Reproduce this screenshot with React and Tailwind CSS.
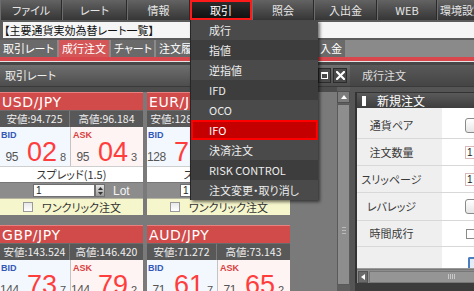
import React from 'react';

const menu = [
  { t: 'ファイル', w: 'w-[62px]' },
  { t: 'レート', w: 'w-[65px]' },
  { t: '情報', w: 'w-[63px]' },
  { t: '取引', w: 'w-[62px]', active: true },
  { t: '照会', w: 'w-[62px]' },
  { t: '入出金', w: 'w-[63px]' },
  { t: 'WEB', w: 'w-[60px]' },
  { t: '環境設定', w: 'w-[50px]' },
];

const tabs = [
  { t: '取引レート', w: 'w-[57px]' },
  { t: '成行注文', w: 'w-[50px]', red: true },
  { t: 'チャート', w: 'w-[43px]' },
  { t: '注文履歴', w: 'w-[50px]' },
  { t: '約定履歴', w: 'w-[50px]' },
  { t: '建玉一覧', w: 'w-[55px]' },
  { t: '入金', w: 'w-[28px]' },
];

const cards = [
  { pair: 'USD/JPY', low: '94.725', high: '96.184', bid: ['95', '02', '8'], ask: ['95', '04', '3'], spread: '1.5' },
  { pair: 'EUR/JPY', low: '128.150', high: '129.880', bid: ['128', '72', '5'], ask: ['128', '74', '5'], spread: '2.0' },
  { pair: 'GBP/JPY', low: '143.524', high: '146.420', bid: ['144', '73', '7'], ask: ['144', '79', '2'], spread: '5.5' },
  { pair: 'AUD/JPY', low: '71.272', high: '73.143', bid: ['71', '61', '7'], ask: ['71', '65', '2'], spread: '3.5' },
];

const dd = ['成行', '指値', '逆指値', 'IFD', 'OCO', 'IFO', '決済注文', 'RISK CONTROL', '注文変更・取り消し'];

function PriceCell({ kind, v }) {
  const bid = kind === 'BID';
  return (
    <div className={bid ? 'bg-[#f3f8fe]' : 'bg-[#fff4f4]'}>
      <div
        className={`mt-[4px] h-[9px] text-[9px] leading-[9px] font-bold font-['Liberation_Sans',sans-serif] ${
          bid ? 'text-[#3358b8] pl-[1px]' : 'text-[#d94040] pl-[2px]'
        }`}
      >
        {kind}
      </div>
      <div className="flex items-baseline font-['Liberation_Sans',sans-serif] -mt-[1px]">
        <span className="w-[18px] text-right text-[12px] text-[#555] tracking-[-0.4px]">{v[0]}</span>
        <span className="ml-[9px] w-[31px] text-[27px] leading-none text-[#ff3d3d]">{v[1]}</span>
        <span className="ml-[2px] text-[11px] text-[#555]">{v[2]}</span>
      </div>
    </div>
  );
}

function Card({ c }) {
  return (
    <div className="w-[143px] flex flex-col">
      <div className="h-[18px] bg-[#d24b4b] border-t border-[#e88080] pl-[2px] flex items-center text-[14px] text-white font-['DejaVu_Sans',sans-serif] tracking-[0.6px]">
        {c.pair}
      </div>
      <div className="h-[17px] grid grid-cols-[70px_1fr] bg-[#585858] border-t border-[#6a6a6a] text-[10.5px] text-[#f0f0f0]">
        <div className="flex items-center justify-center border-r border-[#7a7a7a]">安値:{c.low}</div>
        <div className="flex items-center justify-center">高値:{c.high}</div>
      </div>
      <div className="h-[40px] grid grid-cols-[70px_1fr] gap-x-[1px] bg-[#c4c4c4] border-b border-[#cfcfcf]">
        <PriceCell kind="BID" v={c.bid} />
        <PriceCell kind="ASK" v={c.ask} />
      </div>
      <div className="h-[15px] bg-white flex items-center justify-center text-[11px] text-[#333]">
        スプレッド({c.spread})
      </div>
      <div className="h-[16px] bg-[#8c8c8c] border-t border-[#777] flex items-center">
        <div className="ml-[33px] w-[62px] h-[13px] bg-white border border-[#6f6f6f] text-[10px] leading-[11px] pl-[2px] text-[#222] font-['Liberation_Sans',sans-serif]">
          1
        </div>
        <div className="w-[10px] h-[13px] bg-linear-to-b from-[#e6e6e6] to-[#9a9a9a] border border-[#6f6f6f] flex flex-col items-center justify-center gap-[2px]">
          <svg width="5" height="3" viewBox="0 0 5 3"><path d="M0 3L2.5 0L5 3Z" fill="#333" /></svg>
          <svg width="5" height="3" viewBox="0 0 5 3"><path d="M0 0L2.5 3L5 0Z" fill="#333" /></svg>
        </div>
        <span className="ml-[8px] text-[12px] text-[#f4f4f4] font-['Liberation_Sans',sans-serif]">Lot</span>
      </div>
      <div className="h-[17px] bg-[#f6f6cc] border-t border-[#b5b5a0] flex items-center">
        <div className="ml-[23px] w-[10px] h-[10px] bg-linear-to-b from-[#e8e8e8] to-white border border-[#9a9a9a]" />
        <span className="ml-[9px] text-[11px] text-[#333]">ワンクリック注文</span>
      </div>
    </div>
  );
}

function FormRow({ label, h, children, pt }) {
  return (
    <div className={`${h} flex border-b border-[#d8d8d8]`}>
      <div className={`w-[85px] bg-[#efefef] flex items-center justify-center pr-[16px] text-[11px] text-[#3a3a3a] ${pt || ''}`}>
        {label}
      </div>
      <div className={`flex-1 bg-white flex items-center ${pt || ''}`}>{children}</div>
    </div>
  );
}

export default function App() {
  return (
    <div className="relative w-[474px] h-[291px] overflow-hidden bg-[#474747] font-['Noto_Sans_CJK_JP',sans-serif] [font-feature-settings:'palt'] leading-none">
      {/* menu bar */}
      <div className="h-[20px] flex bg-linear-to-b from-[#636363] to-[#363636] text-[11px] text-[#e6e6e6]">
        {menu.map((m) =>
          m.active ? (
            <div
              key={m.t}
              className={`${m.w} shrink-0 flex items-center justify-center bg-linear-to-b from-[#2c2c2c] to-[#121212] border-2 border-[#ff1a1a] text-white`}
            >
              {m.t}
            </div>
          ) : (
            <div
              key={m.t}
              className={`${m.w} shrink-0 flex items-center justify-center border-r border-[#2a2a2a] border-l border-l-[#6c6c6c]`}
            >
              {m.t}
            </div>
          )
        )}
      </div>

      {/* title field */}
      <div className="h-[20px] bg-[#5b5b5b] pt-[2px] pl-[3px]">
        <div className="h-[16px] bg-[#f5f5f5] text-[11px] leading-[16px] text-[#111] pl-[1px]">
          【主要通貨実効為替レート一覧】
        </div>
      </div>

      {/* tabs */}
      <div className="h-[17px] flex gap-[2px] bg-[#8a8a8a] text-[11px] text-white">
        {tabs.map((t) => (
          <div
            key={t.t}
            className={`${t.w} shrink-0 flex items-center pl-[3px] ${t.red ? 'bg-[#d45656]' : 'bg-[#6a6a6a]'}`}
          >
            {t.t}
          </div>
        ))}
      </div>
      <div className="h-[4px] bg-[#d9464b]" />
      <div className="h-[1px] bg-[#e4e4e4]" />

      {/* windows */}
      <div className="flex h-[229px]">
        {/* left window */}
        <div className="w-[350px] shrink-0 flex flex-col bg-[#474747]">
          <div className="h-[3px]" />
          <div className="h-[22px] flex items-center bg-linear-to-b from-[#6f6f6f] to-[#4d4d4d] border-b border-[#3a3a3a]">
            <span className="pl-[5px] text-[11px] text-[#eeeeee]">取引レート</span>
            <div className="ml-auto flex gap-[2px] pr-[3px]">
              <div className="w-[13px] h-[15px] bg-[#4a4a4a] border border-[#2c2c2c] flex items-center justify-center">
                <div className="w-[7px] h-[7px] border border-white border-t-2" />
              </div>
              <div className="w-[14px] h-[15px] bg-[#4a4a4a] border border-[#2c2c2c] flex items-center justify-center">
                <svg width="9" height="9" viewBox="0 0 9 9">
                  <path d="M1 1L8 8M8 1L1 8" stroke="#fff" strokeWidth="2.2" strokeLinecap="square" />
                </svg>
              </div>
            </div>
          </div>
          <div className="flex-1 flex min-h-0">
            <div className="w-[337px] bg-[#7a7a7a] border-t-[5px] border-[#4c4c4c] grid grid-cols-[143px_143px] gap-x-[4px] gap-y-[10px] content-start overflow-hidden">
              {cards.map((c) => (
                <Card key={c.pair} c={c} />
              ))}
            </div>
            <div className="w-[13px] flex flex-col bg-[#5e5e5e] pt-[4px] pb-[6px]">
              <div className="h-[12px] bg-[#7c7c7c] border border-[#505050] flex items-center justify-center">
                <svg width="6" height="4" viewBox="0 0 6 4"><path d="M0 4L3 0L6 4Z" fill="#fff" /></svg>
              </div>
              <div className="flex-1 mt-[1px] bg-[#8e8e8e] border border-[#5a5a5a] flex flex-col items-center pt-[122px]">
                <div className="w-[4px] h-[1px] bg-[#bbb]" />
                <div className="w-[4px] h-[1px] bg-[#bbb] mt-[2px]" />
                <div className="w-[4px] h-[1px] bg-[#bbb] mt-[2px]" />
              </div>
            </div>
          </div>
        </div>

        {/* right window */}
        <div className="flex-1 flex flex-col bg-[#474747]">
          <div className="h-[3px]" />
          <div className="h-[22px] flex items-center bg-linear-to-b from-[#595959] to-[#454545] border-b border-[#3a3a3a]">
            <span className="pl-[12px] text-[11px] text-[#dddddd]">成行注文</span>
          </div>
          <div className="flex-1 bg-[#555] pl-[5px] pt-[5px] flex flex-col">
            <div className="flex flex-col border-l-2 border-t border-[#333] bg-white">
              <div className="h-[15px] flex items-center bg-linear-to-b from-[#5a5a5a] to-[#3e3e3e]">
                <div className="ml-[5px] w-[4px] h-[10px] bg-white" />
                <span className="ml-[11px] text-[12px] text-white">新規注文</span>
              </div>
              <FormRow label="通貨ペア" h="h-[31px]" pt="pt-[4px]">
                <div className="ml-[23px] w-[20px] h-[15px] rounded-[3px] border border-[#8a8a8a] bg-linear-to-b from-white to-[#e6e6e6]" />
              </FormRow>
              <FormRow label="注文数量" h="h-[27px]">
                <div className="ml-[23px] w-[20px] h-[13px] border border-[#d9b8b8] bg-white text-[10px] leading-[11px] pl-[1px] font-['Liberation_Sans',sans-serif] text-[#222]">
                  1
                </div>
              </FormRow>
              <FormRow label="スリッページ" h="h-[27px]">
                <div className="ml-[23px] w-[20px] h-[13px] border border-[#d9b8b8] bg-white text-[10px] leading-[11px] pl-[1px] font-['Liberation_Sans',sans-serif] text-[#222]">
                  1
                </div>
              </FormRow>
              <FormRow label="レバレッジ" h="h-[28px]">
                <div className="ml-[23px] w-[20px] h-[15px] rounded-[3px] border border-[#8a8a8a] bg-linear-to-b from-white to-[#e6e6e6]" />
              </FormRow>
              <FormRow label="時間成行" h="h-[26px]">
                <div className="ml-[24px] w-[10px] h-[10px] border border-[#8a8a8a] bg-white" />
              </FormRow>
              <div className="h-[21px] flex">
                <div className="w-[85px] bg-[#efefef]" />
                <div className="flex-1 bg-white flex items-end">
                  <div className="ml-[26px] w-[20px] h-[11px] border-2 border-b-0 border-[#4a7ec0] bg-[#e4ecf6] rounded-t-[2px]" />
                </div>
              </div>
              <div className="h-[1px] bg-[#9a9a9a]" />
              <div className="h-[14px] bg-[#8c8c8c] flex items-center border-t border-[#777]">
                <div className="ml-[1px] w-[10px] h-[12px] bg-[#6a6a6a] border border-[#555] flex items-center justify-center">
                  <svg width="4" height="6" viewBox="0 0 4 6"><path d="M4 0L0 3L4 6Z" fill="#fff" /></svg>
                </div>
                <div className="flex-1 h-[12px] ml-[1px] bg-[#959595] border border-[#777] flex items-center justify-center gap-[1px] pl-[46px]">
                  <div className="w-[1px] h-[5px] bg-[#c8c8c8]" />
                  <div className="w-[1px] h-[5px] bg-[#c8c8c8]" />
                  <div className="w-[1px] h-[5px] bg-[#c8c8c8]" />
                  <div className="w-[1px] h-[5px] bg-[#c8c8c8]" />
                </div>
              </div>
            </div>
            <div className="flex-1 bg-[#3c3c3c]" />
          </div>
        </div>
      </div>

      {/* dropdown */}
      <div className="absolute left-[190px] top-[20px] w-[128px] border-l border-[#262626] shadow-[2px_2px_3px_rgba(0,0,0,0.55)]">
        {dd.map((t, i) =>
          t === 'IFO' ? (
            <div key={t} className="h-[20px] bg-[#c40000] border-2 border-[#ff0000] flex items-center pl-[16px] text-[11px] text-white">
              {t}
            </div>
          ) : (
            <div
              key={t}
              className={`h-[20px] flex items-center pl-[18px] text-[11px] text-[#ececec] ${i % 2 ? 'bg-[#3d3d3d]' : 'bg-[#4a4a4a]'}`}
            >
              {t}
            </div>
          )
        )}
      </div>
    </div>
  );
}
